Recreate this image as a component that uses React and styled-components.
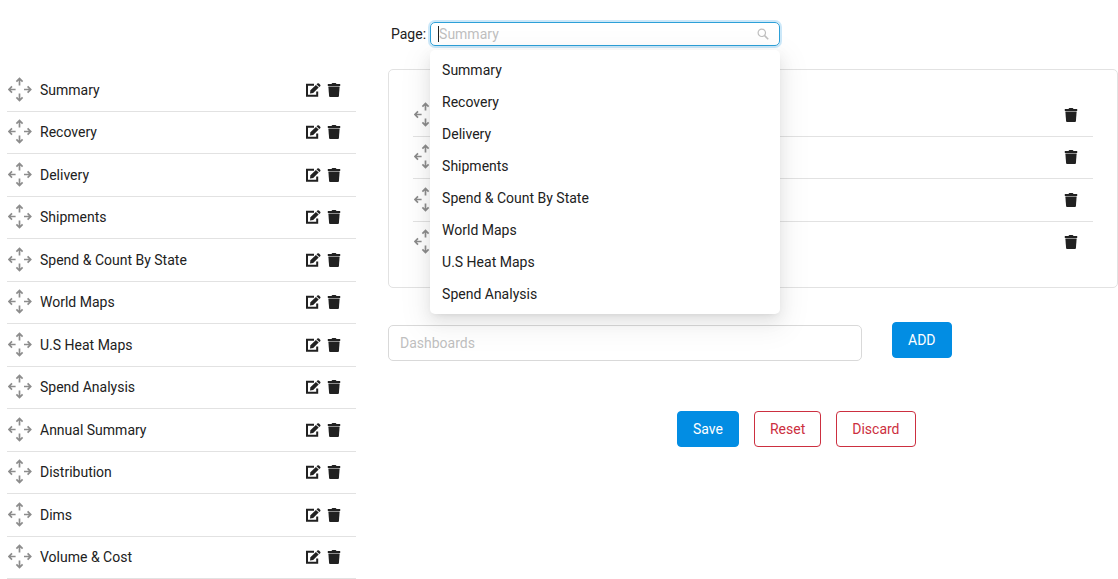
import React, { useState } from 'react';
import styled, { createGlobalStyle } from 'styled-components';

const pages = [
    'Summary',
    'Recovery',
    'Delivery',
    'Shipments',
    'Spend & Count By State',
    'World Maps',
    'U.S Heat Maps',
    'Spend Analysis',
    'Annual Summary',
    'Distribution',
    'Dims',
    'Volume & Cost',
];

const MoveIcon = () => (
    <svg width="24" height="26" viewBox="0 0 24 26" fill="none" stroke="currentColor" strokeWidth="1.7" aria-hidden="true">
        <path d="M11.5 8.6V2M8.4 4.6L11.5 1.5L14.6 4.6" />
        <path d="M11.5 16.4V23M8.4 20.4L11.5 23.5L14.6 20.4" />
        <path d="M7.6 12.5H1M4 9.4L.9 12.5L4 15.6" />
        <path d="M16 12.5h6.6M19.6 9.4L22.7 12.5L19.6 15.6" />
    </svg>
);

const EditIcon = () => (
    <svg width="16" height="14" viewBox="0 0 16 14" aria-hidden="true">
        <path d="M9 1.8H2v10.9h10.2V8.6" fill="none" stroke="currentColor" strokeWidth="2" />
        <path d="M5 10.4L5.4 7.2L10.9 1.9L13.7 4.6L8.2 9.9Z" fill="currentColor" />
        <path d="M11.5 1.3L12.4.5Q13.2 -.2 14 .5L15.2 1.7Q15.9 2.5 15.2 3.2L14.3 4Z" fill="currentColor" />
    </svg>
);

const TrashIcon = () => (
    <svg width="14" height="14" viewBox="0 0 14 14" fill="currentColor" aria-hidden="true">
        <path d="M4.6.9Q4.7 0 5.6 0H8.4Q9.3 0 9.4 .9H13.2V3H.8V.9Z" />
        <path d="M1.4 3h11.2v1.2H1.4Z" opacity=".5" />
        <path d="M1.4 4h11.2L11.9 13.2Q11.8 14 11 14H3Q2.2 14 2.1 13.2Z" />
    </svg>
);

const SearchIcon = () => (
    <svg width="12" height="12" viewBox="0 0 12 12" fill="none" stroke="currentColor" strokeWidth="1.2" aria-hidden="true">
        <circle cx="4.8" cy="4.8" r="3.7" />
        <path d="M7.6 7.6L11.2 11.2" strokeWidth="1.6" />
    </svg>
);

const PageList = () => (
    <List>
        {pages.map(page => (
            <Row key={page}>
                <Handle><MoveIcon /></Handle>
                <RowTitle>{page}</RowTitle>
                <IconButton aria-label={`Edit ${page}`}><EditIcon /></IconButton>
                <IconButton aria-label={`Delete ${page}`}><TrashIcon /></IconButton>
            </Row>
        ))}
    </List>
);

const PageSelect = () => {
    const [search, setSearch] = useState('');
    return (
        <SelectRow>
            <label htmlFor="page">Page:</label>
            <SelectBox>
                <SelectInput
                    id="page"
                    role="combobox"
                    aria-expanded="true"
                    aria-controls="page-options"
                    autoComplete="off"
                    placeholder="Summary"
                    value={search}
                    onChange={e => setSearch(e.target.value)}
                />
                <SearchIcon />
                <Dropdown id="page-options" role="listbox">
                    {pages.slice(0, 8).map(page => (
                        <Option key={page} role="option">{page}</Option>
                    ))}
                </Dropdown>
            </SelectBox>
        </SelectRow>
    );
};

const App = () => (
    <>
        <GlobalStyle />
        <Layout>
            <PageList />
            <Main>
                <PageSelect />
                <Card>
                    {[1, 2, 3, 4].map(id => (
                        <Row key={id}>
                            <Handle><MoveIcon /></Handle>
                            <RowTitle />
                            <IconButton aria-label="Delete dashboard"><TrashIcon /></IconButton>
                        </Row>
                    ))}
                </Card>
                <AddRow>
                    <Field>
                        <TextInput placeholder="Dashboards" aria-label="Dashboards" />
                    </Field>
                    <Button $primary>ADD</Button>
                </AddRow>
                <Actions>
                    <Button $primary>Save</Button>
                    <Button>Reset</Button>
                    <Button>Discard</Button>
                </Actions>
            </Main>
        </Layout>
    </>
);

export default App;

const GlobalStyle = createGlobalStyle`
    * {
        box-sizing: border-box;
    }
    body {
        margin: 0;
        background: #fff;
        color: #212121;
        font-family: Roboto, sans-serif;
        font-size: 14px;
        line-height: 22px;
    }
    button, input {
        font: inherit;
    }
    input::placeholder {
        color: #bfbfbf;
        opacity: 1;
    }
`

const Layout = styled.div`
    display: grid;
    grid-template-columns: 349fr 730fr;
    column-gap: 32px;
    align-items: start;
    padding-left: 7px;
`

const List = styled.ul`
    list-style: none;
    margin: 69px 0 0;
    padding: 0;
`

const Row = styled.li`
    display: flex;
    align-items: center;
    height: 43px;
    padding: 0 15px 0 1px;
    border-bottom: 1px solid #e2e2e2;
    &:nth-child(even) {
        height: 42px;
        padding-bottom: 1px;
    }
`

const Handle = styled.span`
    display: flex;
    color: #8c8c8c;
    cursor: move;
`

const RowTitle = styled.span`
    flex: 1;
    margin-left: 8px;
`

const IconButton = styled.button`
    display: flex;
    justify-content: center;
    padding: 0;
    margin-left: 6px;
    border: none;
    background: none;
    color: #212121;
    cursor: pointer;
`

const Main = styled.main`
    min-width: 0;
`

const SelectRow = styled.div`
    display: flex;
    align-items: center;
    gap: 4px;
    padding: 22px 0 23px 3px;
`

const SelectBox = styled.div`
    position: relative;
    display: flex;
    align-items: center;
    width: 350px;
    height: 24px;
    padding: 0 10px 0 7px;
    border: 1px solid #2da0d8;
    border-radius: 5px;
    box-shadow: 0 0 0 2px rgba(2, 141, 227, 0.2);
    color: #bfbfbf;
`

const SelectInput = styled.input`
    flex: 1;
    min-width: 0;
    height: 16px;
    padding: 0;
    border: none;
    border-left: 1px solid #212121;
    outline: none;
    background: none;
    color: #212121;
`

const Dropdown = styled.ul`
    position: absolute;
    top: 27px;
    left: -1px;
    right: -1px;
    z-index: 1;
    margin: 0;
    padding: 4px 0;
    list-style: none;
    background: #fff;
    border-radius: 5px;
    box-shadow: 0 3px 6px -4px rgba(0, 0, 0, 0.12), 0 6px 16px rgba(0, 0, 0, 0.08), 0 9px 28px 8px rgba(0, 0, 0, 0.05);
    color: #212121;
`

const Option = styled.li`
    padding: 5px 12px;
    cursor: pointer;
`

const Card = styled.ul`
    list-style: none;
    margin: 0;
    padding: 24px;
    border: 1px solid #e2e2e2;
    border-radius: 5px;
    ${Row}:last-child {
        height: 41px;
        border-bottom: none;
    }
`

const AddRow = styled.div`
    display: flex;
    align-items: flex-start;
    gap: 30px;
    margin-top: 34px;
`

const Field = styled.div`
    flex: 1;
    max-width: 474px;
    padding-top: 3px;
`

const TextInput = styled.input`
    display: block;
    width: 100%;
    height: 36px;
    padding: 0 11px;
    border: 1px solid #d9d9d9;
    border-radius: 5px;
    outline: none;
    background: none;
`

const Actions = styled.div`
    display: flex;
    gap: 15px;
    margin: 50px 0 0 289px;
`

const Button = styled.button`
    height: 36px;
    padding: 0 15px;
    border: 1px solid ${props => props.$primary ? '#028de3' : '#cc2f40'};
    border-radius: 4px;
    background: ${props => props.$primary ? '#028de3' : '#fff'};
    color: ${props => props.$primary ? '#fff' : '#cc2f40'};
    cursor: pointer;
`
